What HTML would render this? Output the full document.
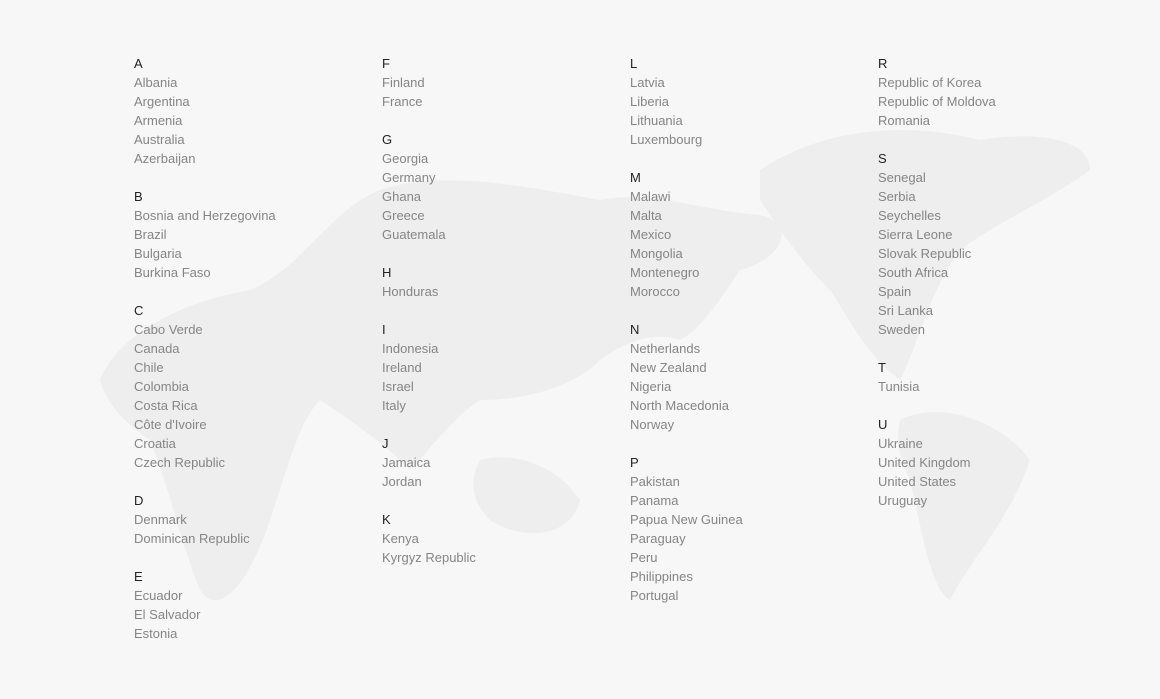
<!DOCTYPE html>
<html><head><style>
body{margin:0;width:1160px;height:699px;background:#f7f7f7;position:relative;overflow:hidden;font-family:"Liberation Sans",sans-serif;}
svg{position:absolute;left:0;top:0}
.col{position:absolute;top:54px;font-size:13px;line-height:19px;color:#858585}
.col b{display:block;font-weight:normal;color:#222}
.col i{display:block;height:19px}
</style></head><body>
<svg width="1160" height="699" fill="#eeeeee">
<path d="M100 380 C120 330 190 300 250 290 C300 270 330 210 380 190 C440 170 520 185 600 200 C650 190 700 210 760 215 C800 225 780 260 740 270 C720 300 700 330 680 340 C650 330 620 345 600 360 C570 390 520 400 480 400 C450 420 430 450 410 470 C380 440 350 420 320 400 C300 420 290 460 270 520 C250 580 220 620 200 590 C180 540 170 490 150 440 C120 420 105 400 100 380Z"/>
<path d="M480 460 C520 450 560 470 580 500 C570 540 520 540 490 520 C470 500 470 480 480 460Z"/>
<path d="M760 170 C820 130 900 120 980 140 C1040 130 1090 140 1090 170 C1050 200 1000 220 960 250 C930 290 920 340 900 380 C870 360 850 320 830 290 C800 260 780 230 760 200Z"/>
<path d="M900 420 C940 400 1000 420 1030 460 C1010 520 970 560 950 600 C930 590 920 520 910 480 C900 460 895 440 900 420Z"/>
</svg>
<div class="col" style="left:134px"><b>A</b>Albania<br>Argentina<br>Armenia<br>Australia<br>Azerbaijan<i></i><b>B</b>Bosnia and Herzegovina<br>Brazil<br>Bulgaria<br>Burkina Faso<i></i><b>C</b>Cabo Verde<br>Canada<br>Chile<br>Colombia<br>Costa Rica<br>Côte d'Ivoire<br>Croatia<br>Czech Republic<i></i><b>D</b>Denmark<br>Dominican Republic<i></i><b>E</b>Ecuador<br>El Salvador<br>Estonia</div>
<div class="col" style="left:382px"><b>F</b>Finland<br>France<i></i><b>G</b>Georgia<br>Germany<br>Ghana<br>Greece<br>Guatemala<i></i><b>H</b>Honduras<i></i><b>I</b>Indonesia<br>Ireland<br>Israel<br>Italy<i></i><b>J</b>Jamaica<br>Jordan<i></i><b>K</b>Kenya<br>Kyrgyz Republic</div>
<div class="col" style="left:630px"><b>L</b>Latvia<br>Liberia<br>Lithuania<br>Luxembourg<i></i><b>M</b>Malawi<br>Malta<br>Mexico<br>Mongolia<br>Montenegro<br>Morocco<i></i><b>N</b>Netherlands<br>New Zealand<br>Nigeria<br>North Macedonia<br>Norway<i></i><b>P</b>Pakistan<br>Panama<br>Papua New Guinea<br>Paraguay<br>Peru<br>Philippines<br>Portugal</div>
<div class="col" style="left:878px"><b>R</b>Republic of Korea<br>Republic of Moldova<br>Romania<i></i><b>S</b>Senegal<br>Serbia<br>Seychelles<br>Sierra Leone<br>Slovak Republic<br>South Africa<br>Spain<br>Sri Lanka<br>Sweden<i></i><b>T</b>Tunisia<i></i><b>U</b>Ukraine<br>United Kingdom<br>United States<br>Uruguay</div>
</body></html>
